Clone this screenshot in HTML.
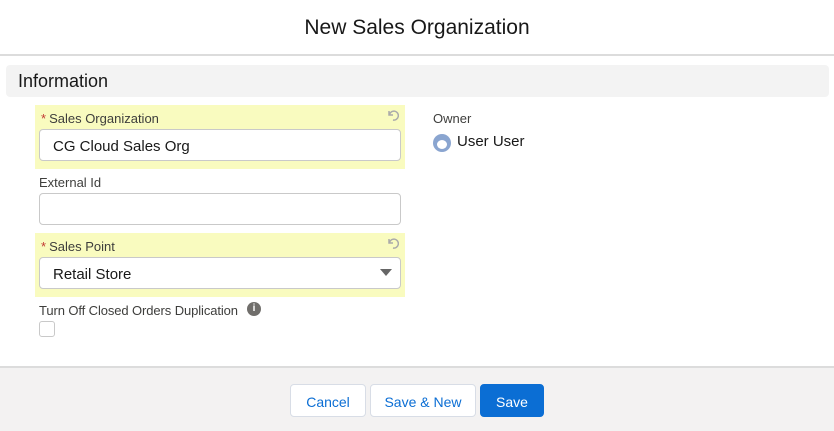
<!DOCTYPE html>
<html><head><style>
*{box-sizing:border-box;margin:0;padding:0}
body{width:834px;height:431px;background:#fff;font-family:"Liberation Sans",Arial,sans-serif;position:relative;overflow:hidden;color:#181818}
.abs{position:absolute}
.title{top:0;left:0;width:834px;height:56px;text-align:center;font-size:21px;line-height:56px;border-bottom:2px solid #dcdcdc}
.sec{left:6px;top:65px;width:823px;height:32px;background:#f3f3f3;border-radius:4px;font-size:18px;line-height:33px;padding-left:12px}
.hl{background:#f9fbbf}
.lbl{font-size:13px;color:#3e3e3c}
.req{color:#c23934;margin-right:3px}
.inp{background:#fff;border:1px solid #c9c9c9;border-radius:4px;height:32px;font-size:15px;line-height:33px;padding-left:13px}
.undo{width:14px;height:14px}
.foot{left:0;top:366px;width:834px;height:65px;background:#f3f2f2;border-top:2px solid #dcdcdc}
.btn{top:384px;height:33px;border:1px solid #d8dde6;border-radius:4px;background:#fff;color:#0b6ed4;font-size:14px;line-height:34px;text-align:center}
</style></head><body>
<div class="abs title">New Sales Organization</div>
<div class="abs sec">Information</div>

<div class="abs hl" style="left:35px;top:105px;width:370px;height:64px"></div>
<div class="abs lbl" style="left:41px;top:111px"><span class="req">*</span>Sales Organization</div>
<svg class="abs undo" style="left:386px;top:108px" viewBox="0 0 14 14"><path d="M3 3v4h4M3.5 6.5A4.5 4.5 0 1 1 7 12" fill="none" stroke="#aaa" stroke-width="1.5"/></svg>
<div class="abs inp" style="left:39px;top:129px;width:362px">CG Cloud Sales Org</div>

<div class="abs lbl" style="left:39px;top:175px">External Id</div>
<div class="abs inp" style="left:39px;top:193px;width:362px"></div>

<div class="abs hl" style="left:35px;top:233px;width:370px;height:64px"></div>
<div class="abs lbl" style="left:41px;top:239px"><span class="req">*</span>Sales Point</div>
<svg class="abs undo" style="left:386px;top:236px" viewBox="0 0 14 14"><path d="M3 3v4h4M3.5 6.5A4.5 4.5 0 1 1 7 12" fill="none" stroke="#aaa" stroke-width="1.5"/></svg>
<div class="abs inp" style="left:39px;top:257px;width:362px">Retail Store</div>
<div class="abs" style="left:380px;top:269px;width:0;height:0;border-left:6px solid transparent;border-right:6px solid transparent;border-top:7px solid #666"></div>

<div class="abs lbl" style="left:39px;top:303px;letter-spacing:-0.1px">Turn Off Closed Orders Duplication</div>
<div class="abs" style="left:247px;top:302px;width:14px;height:14px;border-radius:50%;background:#706e6b;color:#fff;font-size:10px;font-weight:bold;text-align:center;line-height:14px">i</div>
<div class="abs" style="left:39px;top:321px;width:16px;height:16px;border:1px solid #c9c9c9;border-radius:3px"></div>

<div class="abs lbl" style="left:433px;top:111px">Owner</div>
<div class="abs" style="left:433px;top:134px;width:18px;height:18px;border-radius:50%;background:#8aa5d0"><div style="margin:6px 0 0 4px;width:10px;height:9px;border-radius:50%;background:#fff"></div></div>
<div class="abs" style="left:457px;top:133px;font-size:15px">User User</div>

<div class="abs foot"></div>
<div class="abs btn" style="left:290px;width:76px">Cancel</div>
<div class="abs btn" style="left:370px;width:106px">Save &amp; New</div>
<div class="abs btn" style="left:480px;width:64px;background:#0b6ed4;border-color:#0b6ed4;color:#fff">Save</div>
</body></html>
